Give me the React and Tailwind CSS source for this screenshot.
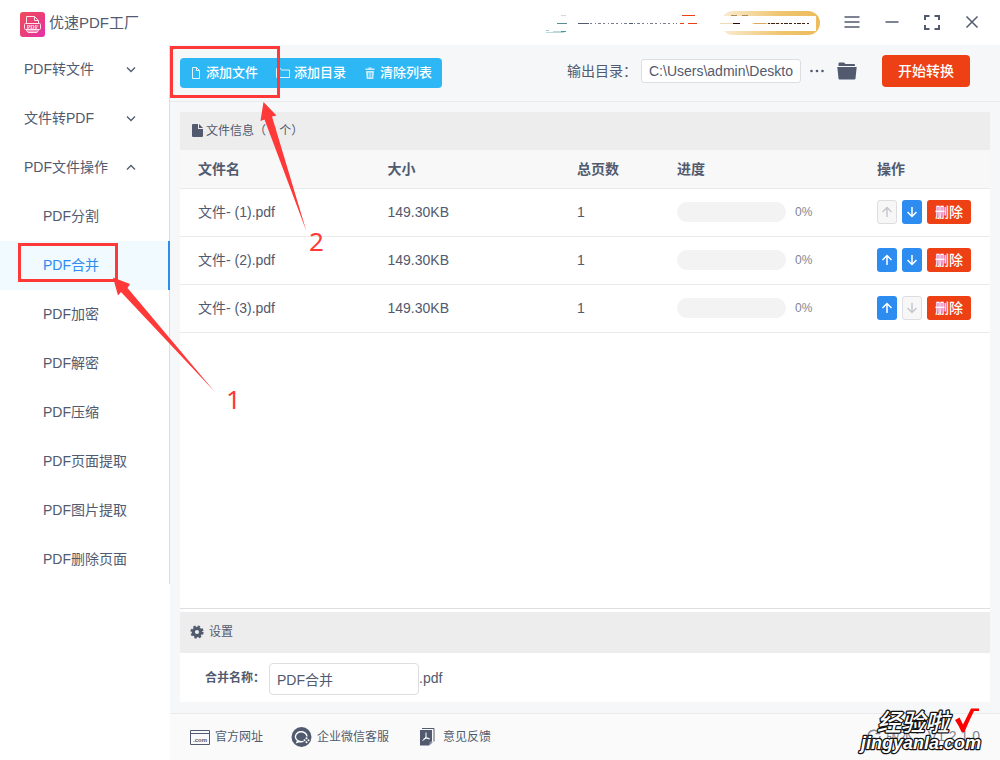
import { Fragment } from 'react';

const MENU = [
  { label: 'PDF转文件', open: false },
  { label: '文件转PDF', open: false },
  {
    label: 'PDF文件操作',
    open: true,
    children: ['PDF分割', 'PDF合并', 'PDF加密', 'PDF解密', 'PDF压缩', 'PDF页面提取', 'PDF图片提取', 'PDF删除页面']
  }
];

const FILES = [
  { name: '文件- (1).pdf', size: '149.30KB', pages: 1, progress: 0 },
  { name: '文件- (2).pdf', size: '149.30KB', pages: 1, progress: 0 },
  { name: '文件- (3).pdf', size: '149.30KB', pages: 1, progress: 0 }
];

function Logo() {
  return (
    <svg width="25" height="25" viewBox="0 0 25 25" aria-hidden="true">
      <defs>
        <linearGradient id="logo" x1="0" y1="0" x2="1" y2="1">
          <stop offset="0" stopColor="#ee4a5c" />
          <stop offset="0.5" stopColor="#ea3f78" />
          <stop offset="1" stopColor="#e52fae" />
        </linearGradient>
      </defs>
      <rect width="25" height="25" rx="3" fill="url(#logo)" />
      <g fill="none" stroke="#fde3ea" strokeWidth="1">
        <path d="M6.500 11.500V4.500h8l4 4v3M14.500 4.500v4h4" />
        <rect x="4.500" y="11.500" width="16" height="6" rx="1" />
        <path d="M6.500 17.500v1l1.500 2h9l1.500-2v-1M7 19h11" />
      </g>
      <text x="12.500" y="16.800" textAnchor="middle" fontSize="6" fontWeight="700" fill="#fde3ea" fontFamily="Liberation Serif, serif">PDF</text>
    </svg>
  );
}

// Zona de usuario y VIP, parcialmente tapada
function AccountBanner() {
  return (
    <svg width="275" height="27" viewBox="545 9 275 27" aria-hidden="true">
      <defs>
        <linearGradient id="vip" x1="0" y1="0" x2="1" y2="0">
          <stop offset="0" stopColor="#fbecd2" />
          <stop offset="0.6" stopColor="#efc56f" />
          <stop offset="1" stopColor="#edbb5c" />
        </linearGradient>
      </defs>
      <rect x="721" y="11" width="99" height="24" rx="12" fill="url(#vip)" />
      <rect x="718" y="16" width="98" height="15" fill="#fff" />
      <path d="M720 23.500h18M752 23.500h30" stroke="#f0dcb4" />
      <path d="M733 23.500h7" stroke="#2b0a0a" />
      <path d="M731 15.500h6M742 15.500h6" stroke="#a98c62" />
      <path d="M754 23.500h12" stroke="#d8ac60" />
      <path d="M768 23.500h41" stroke="#3a2312" strokeDasharray="2 1 4 1 3 2" />
      <path d="M561 15.500h5" stroke="#cfdada" />
      <path d="M557 23.500h10" stroke="#5d8c8c" />
      <path d="M546 30.500h3" stroke="#a5cbd0" />
      <path d="M553 31.500h8" stroke="#b9d9dc" />
      <path d="M561 31.500h5" stroke="#4f979d" />
      <path d="M546 32.500h18" stroke="#b9d9dc" />
      <path d="M578 23.500h11" stroke="#515a6e" />
      <path d="M590 23.500h87" stroke="#777d8c" strokeDasharray="2 3 1 2 3 2" />
      <path d="M629 23.500h4" stroke="#515a6e" />
      <path d="M682 15.500h13M680 23.500h4M688 23.500h9" stroke="#ed4014" />
    </svg>
  );
}

function TitleBar() {
  const button = 'flex h-[25px] w-4 items-center justify-center';
  return (
    <header className="flex h-[45px] items-center bg-white pr-5 pl-5">
      <div className="flex items-center gap-1 pt-1">
        <Logo />
        <h1 className="pb-1 text-[15px] leading-5">优速PDF工厂</h1>
      </div>
      <div className="ml-auto flex items-center gap-6">
        <AccountBanner />
        <button type="button" aria-label="菜单" className={button}>
          <svg width="16" height="15" viewBox="0 0 16 15" stroke="currentColor" strokeWidth="1.500">
            <path d="M.5 2h15M.5 7h15M.5 12h15" />
          </svg>
        </button>
        <button type="button" aria-label="最小化" className={button}>
          <svg width="16" height="15" viewBox="0 0 16 15" stroke="currentColor" strokeWidth="1.500">
            <path d="M1.500 7h13" />
          </svg>
        </button>
        <button type="button" aria-label="最大化" className={button}>
          <svg width="16" height="15" viewBox="0 0 16 15" fill="none" stroke="currentColor" strokeWidth="2">
            <path d="M1 5V1h4.500M10.500 1H15v4M15 10v4h-4.500M5.500 14H1v-4" />
          </svg>
        </button>
        <button type="button" aria-label="关闭" className={button}>
          <svg width="16" height="15" viewBox="0 0 16 15" stroke="currentColor" strokeWidth="1.500">
            <path d="M2.500 1.500l11 11M13.500 1.500l-11 11" />
          </svg>
        </button>
      </div>
    </header>
  );
}

function Sidebar() {
  return (
    <aside className="w-[170px] shrink-0 bg-white">
      <nav className="border-r border-[#dcdee2]">
        {MENU.map((group) => (
          <Fragment key={group.label}>
            <button type="button" aria-expanded={group.open} className="flex h-[49px] w-full items-center justify-between pr-8 pb-[2px] pl-6 text-left">
              {group.label}
              <svg width="12" height="12" viewBox="0 0 12 12" fill="none" stroke="currentColor" strokeWidth="1.300">
                <path d={group.open ? 'M2 8.500l4-4 4 4' : 'M2 4.500l4 4 4-4'} />
              </svg>
            </button>
            {group.children?.map((item) => (
              <a
                key={item}
                href="#"
                className={
                  item === 'PDF合并'
                    ? '-mr-px flex h-[49px] items-center border-r-2 border-[#2d8cf0] bg-[#f0faff] pb-[2px] pl-[43px] text-[#2d8cf0]'
                    : 'flex h-[49px] items-center pb-[2px] pl-[43px]'
                }
              >
                {item}
              </a>
            ))}
          </Fragment>
        ))}
      </nav>
    </aside>
  );
}

function Toolbar() {
  const button = 'flex h-[30px] items-center gap-1 text-[13px] font-medium';
  return (
    <div className="flex h-[57px] items-center border-b border-[#e8eaec] pr-[30px] pl-[10px]">
      <div className="flex overflow-hidden rounded bg-[#2db7f5] pr-[10px] pl-[10px] text-white">
        <button type="button" className={button}>
          <svg width="12" height="12" viewBox="0 0 12 12" fill="none" stroke="currentColor" strokeOpacity="0.85">
            <path d="M2.500 .5h4l3 3v8h-7zM6.500 .5v3h3" />
          </svg>
          添加文件
        </button>
        <button type="button" className={`${button} ml-[18px]`}>
          <svg width="14" height="12" viewBox="0 0 14 12" fill="none" stroke="currentColor" strokeOpacity="0.85">
            <path d="M.5 10.500v-9h4l1 1.500h8v7.500z" />
          </svg>
          添加目录
        </button>
        <button type="button" className={`${button} ml-[18px]`}>
          <svg width="12" height="12" viewBox="0 0 12 12" fill="currentColor" fillOpacity="0.75">
            <path d="M1.500 1.500h3v-1h3v1h3v1.500h-9zM2 4h8l-.7 8H2.700zM4 5.500v5h.7v-5zM5.700 5.500v5h.7v-5zM7.400 5.500v5h.7v-5z" fillRule="evenodd" />
          </svg>
          清除列表
        </button>
      </div>
      <div className="ml-auto flex items-center pb-1">
        <label htmlFor="outdir" className="w-[74px] whitespace-nowrap">输出目录：</label>
        <input
          id="outdir"
          type="text"
          readOnly
          value="C:\Users\admin\Deskto"
          className="h-6 w-40 rounded-[3px] border border-[#dcdee2] bg-white px-[7px] outline-none"
        />
        <button type="button" aria-label="更多" className="ml-2">
          <svg width="16" height="16" viewBox="0 0 16 16" fill="currentColor">
            <circle cx="2.500" cy="8" r="1.300" />
            <circle cx="8" cy="8" r="1.300" />
            <circle cx="13.500" cy="8" r="1.300" />
          </svg>
        </button>
        <button type="button" aria-label="打开目录" className="ml-3">
          <svg width="20" height="18" viewBox="0 0 20 18" fill="currentColor">
            <path d="M1.500 4V1.500Q1.500 .5 2.500 .5H7l1.500 1.500h8.500q1 0 1 1V4z" />
            <path d="M.3 5h19.400l-1.200 11.500q-.1 1-1 1h-15q-.9 0-1-1z" />
          </svg>
        </button>
        <button type="button" className="ml-[25px] h-8 w-[88px] rounded bg-[#ed4014] font-medium text-white">
          开始转换
        </button>
      </div>
    </div>
  );
}

function MoveButton({ up, disabled }) {
  return (
    <button
      type="button"
      disabled={disabled}
      aria-label={up ? '上移' : '下移'}
      className={
        disabled
          ? 'flex h-6 w-5 items-center justify-center rounded-[3px] border border-[#dcdee2] bg-[#f7f7f7] text-[#c5c8ce]'
          : 'flex h-6 w-5 items-center justify-center rounded-[3px] bg-[#2d8cf0] text-white'
      }
    >
      <svg width="12" height="12" viewBox="0 0 12 12" className="shrink-0" fill="none" stroke="currentColor" strokeWidth="1.500">
        <path d={up ? 'M6 11V1.500M1.500 6L6 1.500 10.500 6' : 'M6 1v9.500M1.500 6L6 10.500 10.500 6'} />
      </svg>
    </button>
  );
}

function FileTable() {
  return (
    <section className="flex flex-1 flex-col border-b border-[#dcdee2] bg-white">
      <h2 className="flex h-[38px] items-center gap-[3px] bg-[#ededed] pl-3 text-xs">
        <svg width="11" height="14" viewBox="0 0 11 14" fill="currentColor" aria-hidden="true">
          <path d="M1 0h5v5h5v7q0 1-1 1H1q-1 0-1-1V1q0-1 1-1zM7 0l4 4H7z" />
        </svg>
        文件信息（ 3 个）
      </h2>
      <table className="w-full table-fixed text-left">
        <thead className="bg-[#f8f8f9]">
          <tr className="h-[38px] border-b border-[#e8eaec]">
            <th className="pl-[18px]">文件名</th>
            <th className="pl-[18px]">大小</th>
            <th className="w-[100px] pl-[18px]">总页数</th>
            <th className="w-[200px] pl-[18px]">进度</th>
            <th className="w-[131px] pl-[18px]">操作</th>
          </tr>
        </thead>
        <tbody>
          {FILES.map((file, i) => (
            <tr key={file.name} className="h-12 border-b border-[#e8eaec]">
              <td className="pl-[18px]">{file.name}</td>
              <td className="pl-[18px]">{file.size}</td>
              <td className="pl-[18px]">{file.pages}</td>
              <td className="pl-[18px]">
                <div className="flex items-center gap-[9px]">
                  <div className="h-5 w-[109px] overflow-hidden rounded-full bg-[#f3f3f3]">
                    <div className="h-full bg-[#2d8cf0]" style={{ width: `${file.progress}%` }} />
                  </div>
                  <span className="text-xs text-[#808695]">{file.progress}%</span>
                </div>
              </td>
              <td className="pl-[18px]">
                <div className="flex gap-[5px]">
                  <MoveButton up disabled={i === 0} />
                  <MoveButton disabled={i === FILES.length - 1} />
                  <button type="button" className="h-6 w-11 rounded-[3px] bg-[#ed4014] font-medium text-white">
                    删除
                  </button>
                </div>
              </td>
            </tr>
          ))}
        </tbody>
      </table>
    </section>
  );
}

function Settings() {
  return (
    <section className="border-t-[3px] border-white bg-white">
      <h2 className="flex h-[41px] items-center gap-[5px] bg-[#ededed] pb-[2px] pl-[10px] text-xs">
        <svg width="14" height="14" viewBox="0 0 14 14" aria-hidden="true">
          <circle cx="7" cy="7" r="3.700" fill="none" stroke="currentColor" strokeWidth="3.200" />
          <circle cx="7" cy="7" r="5.600" fill="none" stroke="currentColor" strokeWidth="2" strokeDasharray="2.400 2" />
        </svg>
        设置
      </h2>
      <div className="flex h-[49px] items-center pl-[25px]">
        <label htmlFor="outname" className="w-16 text-xs font-bold whitespace-nowrap">合并名称：</label>
        <input
          id="outname"
          type="text"
          defaultValue="PDF合并"
          className="mt-[3px] h-8 w-[150px] rounded border border-[#dcdee2] px-[7px] outline-none"
        />
        <span>.pdf</span>
      </div>
    </section>
  );
}

function Footer() {
  return (
    <footer className="flex h-[47px] items-center border-t border-[#e8eaec] bg-[#fafafa] pr-5 pl-5 text-xs">
      <a href="#" className="flex items-center gap-[5px]">
        <svg width="20" height="16" viewBox="0 0 20 16" fill="none" stroke="currentColor" aria-hidden="true">
          <path d="M.5 1.500h19v14H.5zM.5 4.500h19" />
          <text x="10" y="13" textAnchor="middle" fontSize="6" fontWeight="700" fill="currentColor" stroke="none" fontFamily="Liberation Sans, sans-serif">.com</text>
        </svg>
        官方网址
      </a>
      <a href="#" className="ml-7 flex items-center gap-[5px]">
        <svg width="21" height="20" viewBox="0 0 20 20" fill="none" aria-hidden="true">
          <circle cx="10" cy="10" r="10" fill="currentColor" />
          <path d="M12 14.300A5.800 5 0 1 1 15.500 9.500M6.500 13.300l-1 2 2.800-.9" stroke="#fff" strokeWidth="1.400" />
          <g fill="#fff">
            <circle cx="15" cy="11.300" r="1" />
            <circle cx="17" cy="13.300" r="1" />
            <circle cx="15" cy="15.300" r="1" />
            <circle cx="13" cy="13.300" r="1" />
          </g>
        </svg>
        企业微信客服
      </a>
      <a href="#" className="ml-[30px] flex items-center gap-2">
        <svg width="16" height="18" viewBox="0 0 16 18" aria-hidden="true">
          <path d="M3 .5h12v13" fill="none" stroke="currentColor" />
          <path d="M1 2h12v11l-3 4.500H1z" fill="currentColor" />
          <path d="M10.500 17.500v-3.500h3.500z" fill="#8a90a0" />
          <path d="M7 4.500v4M7 8.500q-.5 3-3.500 4M7 8.500q1 2.500 3.500 2.500M4.500 11q2-1.500 6-.5" fill="none" stroke="#fff" />
        </svg>
        意见反馈
      </a>
      <span className="ml-auto flex items-center gap-1 pb-[2px] text-sm text-[#808695]">
        <svg width="16" height="16" viewBox="0 0 16 16" fill="none" stroke="currentColor" strokeWidth="1.500" aria-hidden="true">
          <path d="M2 8a6 6 0 0 1 11-3M13.500 1.500V5.500h-4M14 8a6 6 0 0 1-11 3" />
        </svg>
        版本：V1.2.1.0
      </span>
    </footer>
  );
}

// Marcas del tutorial: recuadros, flechas y números
function Annotations() {
  return (
    <svg width="340" height="420" viewBox="0 0 340 420" className="pointer-events-none absolute top-0 left-0">
      <g fill="none" stroke="#ff3838" strokeWidth="3">
        <rect x="171.500" y="47.500" width="107" height="49" />
        <rect x="19.500" y="244.500" width="97" height="36" />
      </g>
      <g fill="#ff3838">
        <path d="M263.500 102L276.500 115.500l-4.500 1L306.500 231.500 264.500 119.500 260.500 121z" />
        <path d="M113 277.500l17 6.500-2.500 4L214.500 391.500 121 292 118 295.500z" />
        <g fontFamily="Noto Sans, sans-serif" fontSize="26">
          <text x="226" y="409">1</text>
          <text x="309" y="251">2</text>
        </g>
      </g>
    </svg>
  );
}

function Watermark() {
  return (
    <svg width="144" height="56" viewBox="856 704 144 56" className="pointer-events-none absolute right-0 bottom-0">
      <g fill="#fff" stroke="#111" strokeWidth="2.500" strokeLinejoin="round" paintOrder="stroke" fontStyle="italic">
        <text x="877" y="731" fontSize="24" fontWeight="500" fontFamily="Noto Sans CJK SC, sans-serif">经验啦</text>
        <text x="861" y="749" fontSize="18" fontWeight="700" fontFamily="Liberation Sans, sans-serif">jingyanla.com</text>
      </g>
      <path d="M955 720l4.500-2.500 3.500 7q5-10 8-16h8v2.500h-5q-4 8-9.500 21h-3q-3-7-6.500-12z" fill="#f00" />
    </svg>
  );
}

export default function App() {
  return (
    <div className="relative flex min-h-screen flex-col bg-white font-['Liberation_Sans','Noto_Sans_CJK_SC',sans-serif] text-sm text-[#515a6e]">
      <TitleBar />
      <div className="flex flex-1">
        <Sidebar />
        <div className="flex min-w-0 flex-1 flex-col bg-[#f5f7f9]">
          <Toolbar />
          <main className="flex flex-1 flex-col px-[10px] pt-[10px] pb-[11px]">
            <FileTable />
            <Settings />
          </main>
          <Footer />
        </div>
      </div>
      <Annotations />
      <Watermark />
    </div>
  );
}
